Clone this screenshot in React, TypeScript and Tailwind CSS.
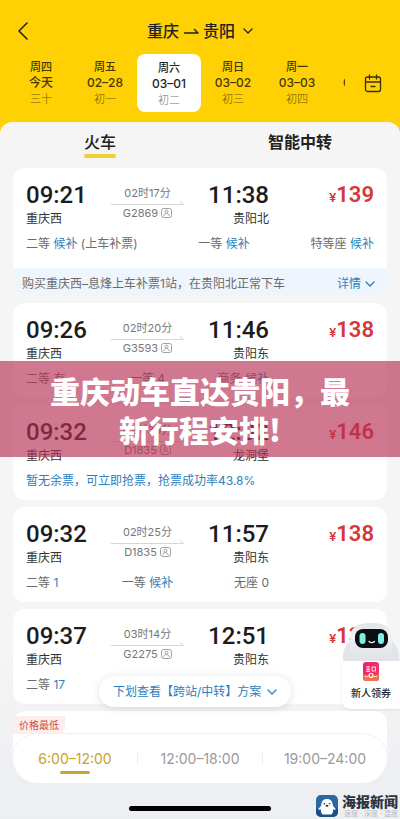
import { useState } from 'react'
import clsx from 'clsx'

type Seat = { name: string; value: string; note?: string; muted?: boolean }

type Train = {
  depart: string
  from: string
  duration: string
  no: string
  arrive: string
  to: string
  price: string
  seats?: Seat[]
  tip?: string
  notice?: string
}

const days = [
  { week: '周四', date: '今天', lunar: '三十' },
  { week: '周五', date: '02–28', lunar: '初一' },
  { week: '周六', date: '03–01', lunar: '初二' },
  { week: '周日', date: '03–02', lunar: '初三' },
  { week: '周一', date: '03–03', lunar: '初四' },
]

const trains: Train[] = [
  {
    depart: '09:21',
    from: '重庆西',
    duration: '02时17分',
    no: 'G2869',
    arrive: '11:38',
    to: '贵阳北',
    price: '139',
    seats: [
      { name: '二等', value: '候补', note: '(上车补票)' },
      { name: '一等', value: '候补' },
      { name: '特等座', value: '候补' },
    ],
    notice: '购买重庆西–息烽上车补票1站，在贵阳北正常下车',
  },
  {
    depart: '09:26',
    from: '重庆西',
    duration: '02时20分',
    no: 'G3593',
    arrive: '11:46',
    to: '贵阳东',
    price: '138',
    seats: [
      { name: '二等', value: '有', muted: true },
      { name: '一等', value: '4', muted: true },
      { name: '商务', value: '候补' },
    ],
  },
  {
    depart: '09:32',
    from: '重庆西',
    duration: '02时30分',
    no: 'D1835',
    arrive: '12:02',
    to: '龙洞堡',
    price: '146',
    tip: '暂无余票，可立即抢票，抢票成功率43.8%',
  },
  {
    depart: '09:32',
    from: '重庆西',
    duration: '02时25分',
    no: 'D1835',
    arrive: '11:57',
    to: '贵阳东',
    price: '138',
    seats: [
      { name: '二等', value: '1' },
      { name: '一等', value: '候补' },
      { name: '无座', value: '0', muted: true },
    ],
  },
  {
    depart: '09:37',
    from: '重庆西',
    duration: '03时14分',
    no: 'G2275',
    arrive: '12:51',
    to: '贵阳东',
    price: '138',
    seats: [{ name: '二等', value: '17' }],
  },
]

const periods = ['6:00–12:00', '12:00–18:00', '19:00–24:00']

const ChevronDown = ({ className }: { className?: string }) => (
  <svg viewBox="0 0 10 6" className={className} fill="none" stroke="currentColor" strokeWidth="1.3">
    <path d="M1 1l4 4 4-4" strokeLinecap="round" strokeLinejoin="round" />
  </svg>
)

const IdCardIcon = () => (
  <svg width="11" height="10" viewBox="0 0 11 10" fill="none" stroke="#8a8a8a" strokeWidth="0.8">
    <rect x="0.5" y="0.5" width="10" height="9" rx="2" />
    <circle cx="5.5" cy="3.7" r="1.5" />
    <path d="M2.6 8.2c.3-1.7 1.5-2.6 2.9-2.6s2.6.9 2.9 2.6" />
  </svg>
)

const SeatText = ({ seat }: { seat: Seat }) => (
  <span className="whitespace-nowrap text-[#6b6b6b]">
    {seat.name}{' '}
    <span className={clsx(!seat.muted && 'text-[#2b7fbd]')}>{seat.value}</span>
    {seat.note && ` ${seat.note}`}
  </span>
)

const TrainCard = ({ train }: { train: Train }) => {
  const cols = 'grid grid-cols-[85fr_73fr_85fr_105fr]'
  return (
    <li className="overflow-hidden rounded-xl bg-white">
      <div className={clsx('px-[13px] pt-[14px]', train.notice ? 'pb-[15px]' : 'pb-[10px]')}>
        <div className={cols}>
          <div>
            <div className="font-[Roboto] text-2xl/[26px] font-medium text-[#1c1c1e]">
              {train.depart}
            </div>
            <div className="mt-[3px] text-xs/4 text-[#333]">{train.from}</div>
          </div>
          <div className="pt-[3px] text-center text-[11px]/4 text-[#777]">
            <div className="whitespace-nowrap">{train.duration}</div>
            <svg viewBox="0 0 73 4" className="block h-1 w-full" fill="none" stroke="#d6d6d6">
              <path d="M0 3.500H72.500L69 0" />
            </svg>
            <div className="flex items-center justify-center gap-[3px]">
              {train.no}
              <IdCardIcon />
            </div>
          </div>
          <div className="text-right">
            <div className="font-[Roboto] text-2xl/[26px] font-medium text-[#1c1c1e]">
              {train.arrive}
            </div>
            <div className="mt-[3px] text-xs/4 text-[#333]">{train.to}</div>
          </div>
          <div className="text-right font-[Roboto] text-[22px]/[26px] font-semibold text-[#d8373a]">
            <span className="text-[13px]">¥</span>
            {train.price}
          </div>
        </div>
        {train.tip && <p className="mt-2 text-xs/[18px] text-[#2b7fbd]">{train.tip}</p>}
        {train.seats && (
          <div
            className={clsx('mt-2 text-xs/[18px]', train.notice ? 'flex justify-between' : cols)}
          >
            {train.seats.map((seat, i) => (
              <div
                key={seat.name}
                className={clsx(
                  !train.notice && i === 1 && 'flex justify-center',
                  !train.notice && i === 2 && 'text-right'
                )}
              >
                <SeatText seat={seat} />
              </div>
            ))}
          </div>
        )}
      </div>
      {train.notice && (
        <div className="flex h-7 items-center justify-between bg-[#eff5fd] pt-1 pr-3 pl-[9px] text-xs text-[#6b6b6b]">
          <span className="whitespace-nowrap">{train.notice}</span>
          <button type="button" className="flex items-center gap-1 whitespace-nowrap text-[#2b7fbd]">
            详情
            <ChevronDown className="h-[6px] w-[10px]" />
          </button>
        </div>
      )}
    </li>
  )
}

const Robot = () => (
  <svg viewBox="0 0 58 38" className="block h-[38px] w-full">
    <defs>
      <linearGradient id="shell" x1="0" y1="0" x2="0" y2="1">
        <stop offset="0" stopColor="#dfe1e5" />
        <stop offset="0.3" stopColor="#f1f2f4" />
        <stop offset="1" stopColor="#dfe2e6" />
      </linearGradient>
    </defs>
    <path d="M10 16C4 20 0 29 1 38h12zM48 16c6 4 10 13 9 22H45z" fill="#e1e4e8" />
    <path d="M29 0c14 0 20 4 21 14 1 8 0 16-3 24H11C8 30 7 22 8 14 9 4 15 0 29 0z" fill="url(#shell)" />
    <rect x="13" y="6" width="33" height="19" rx="8" fill="#0d1013" />
    <rect x="17.5" y="10" width="6" height="11" rx="3" fill="#7df0e2" />
    <rect x="36" y="10" width="6" height="11" rx="3" fill="#7df0e2" />
    <path d="M27 18.500c1.500 1.300 4 1.300 5.500 0" fill="none" stroke="#fff" strokeWidth="1.2" strokeLinecap="round" />
  </svg>
)

const CouponIcon = () => (
  <svg width="16" height="19" viewBox="0 0 16 19" className="block">
    <defs>
      <linearGradient id="coupon" x1="0" y1="0" x2="1" y2="1">
        <stop offset="0" stopColor="#e81c78" />
        <stop offset="1" stopColor="#f4475a" />
      </linearGradient>
    </defs>
    <rect width="16" height="19" rx="3" fill="url(#coupon)" />
    <path d="M0 12c5 2 11 2 16 0v4a3 3 0 0 1-3 3H3a3 3 0 0 1-3-3z" fill="#f5704f" />
    <path d="M3 5h4M3 7.500h4M5 4v5M9 5h3.500v4H9zM3 9.500h4" fill="none" stroke="#ffd9e0" />
    <circle cx="8" cy="13.5" r="2" fill="none" stroke="#fff" strokeWidth="1.2" />
    <path d="M2 14.500h3M11 14.500h3" stroke="#ffd9c0" />
  </svg>
)

const SealLogo = () => (
  <svg width="22" height="22" viewBox="0 0 22 22" className="shrink-0">
    <rect width="22" height="22" rx="5" fill="#2b68a3" />
    <path d="M0 14c5-2 17-2 22 0v3a5 5 0 0 1-5 5H5a5 5 0 0 1-5-5z" fill="#1d4f86" />
    <path
      d="M11 4c3.600 0 5.300 2.200 5.700 5.500.2 1.800 1.200 2.800 2.600 3.700.9.700.3 1.700-.9 1.500l-1.400-.2c.3 2.300-.3 4-1.500 5H6.500c-1.200-1-1.800-2.700-1.500-5l-1.400.2c-1.200.2-1.800-.8-.9-1.500 1.400-.9 2.400-1.900 2.600-3.700C5.700 6.200 7.400 4 11 4z"
      fill="#fff"
    />
    <circle cx="8.3" cy="8.8" r="0.8" fill="#222" />
    <circle cx="13.7" cy="8.8" r="0.8" fill="#222" />
    <ellipse cx="11" cy="10.8" rx="1.5" ry="1" fill="#333" />
  </svg>
)

export default function App() {
  const [day, setDay] = useState(2)
  const [tab, setTab] = useState(0)
  const [period, setPeriod] = useState(0)

  return (
    <div className="relative min-h-screen overflow-hidden bg-[#ffd003] font-[Inter,'Noto_Sans_CJK_SC',sans-serif] text-[#222]">
      <header className="pt-4 pb-[10px]">
        <div className="grid h-[30px] grid-cols-[1fr_auto_1fr] items-center px-4">
          <button type="button" aria-label="返回" className="justify-self-start">
            <svg width="13" height="20" viewBox="0 0 13 20" fill="none" stroke="#222" strokeWidth="1.6">
              <path d="M11 2L3 10l8 8" strokeLinecap="round" strokeLinejoin="round" />
            </svg>
          </button>
          <button type="button" className="flex items-center text-base/6 font-medium">
            <span>重庆</span>
            <svg width="16" height="8" viewBox="0 0 16 8" className="mx-1" fill="none" stroke="#222" strokeWidth="1.4">
              <path d="M1 6h14l-4-4" strokeLinejoin="round" />
            </svg>
            <span>贵阳</span>
            <ChevronDown className="ml-2 h-[6px] w-[10px]" />
          </button>
        </div>

        <div className="mt-2 flex h-[58px] pl-[9px]">
          {days.map((d, i) => (
            <button
              key={d.date}
              type="button"
              onClick={() => setDay(i)}
              className={clsx(
                'flex flex-1 flex-col items-center rounded-lg text-xs/4 font-medium',
                i === day ? 'bg-white pt-[6px] text-[#222]' : 'pt-[5px] text-[#443806]'
              )}
            >
              <span className="text-[11px]/4">{d.week}</span>
              <span>{d.date}</span>
              <span className={clsx('text-[11px]/4 font-light', i === day ? 'text-[#777]' : 'text-[#6e5c0c]')}>
                {d.lunar}
              </span>
            </button>
          ))}
          <div className="w-4 overflow-hidden pt-[21px] pl-[14px] text-xs/4 font-medium whitespace-nowrap text-[#443806]">
            03–04
          </div>
          <button type="button" aria-label="日历" className="flex w-[55px] items-center justify-center">
            <svg width="18" height="19" viewBox="0 0 18 19" fill="none" stroke="#3a3008" strokeWidth="1.3" strokeLinecap="round">
              <rect x="1.5" y="3" width="15" height="14.5" rx="2" />
              <path d="M5.500 1v4M12.500 1v4M1.500 8h15M7 12.500h4" />
            </svg>
          </button>
        </div>
      </header>

      <main className="rounded-t-xl bg-linear-to-b from-[#f5f5f5] from-75% to-[#eeeff3] to-95%">
        <div role="tablist" className="grid h-[46px] grid-cols-2 items-start pt-2">
          {['火车', '智能中转'].map((name, i) => (
            <button
              key={name}
              type="button"
              role="tab"
              aria-selected={i === tab}
              onClick={() => setTab(i)}
              className={clsx(
                'flex flex-col items-center text-base/6',
                i === tab ? 'font-medium' : 'font-bold'
              )}
            >
              {name}
              {i === tab && <span className="h-1 w-8 rounded-full bg-[#efd02f]" />}
            </button>
          ))}
        </div>

        <ul className="flex flex-col gap-[7px] px-[13px]">
          {trains.map((t) => (
            <TrainCard key={t.no + t.depart} train={t} />
          ))}
          <li className="h-12 overflow-hidden rounded-t-xl bg-white">
            <span className="inline-block rounded-br-md bg-[#fdeeec] px-[6px] text-[10px]/[18px] text-[#cf4a47]">
              价格最低
            </span>
          </li>
        </ul>

        <nav className="relative mx-3 -mt-[26px] flex h-[51px] items-center rounded-full border border-[#f0f0f0] bg-white">
          {periods.map((p, i) => (
            <button
              key={p}
              type="button"
              onClick={() => setPeriod(i)}
              className={clsx(
                'flex h-3 flex-1 flex-col items-center text-sm/5 whitespace-nowrap',
                i > 0 && 'border-l border-[#ececec]',
                i === period ? 'text-[#c9a227]' : 'text-[#9a9a9a]'
              )}
            >
              <span className="-mt-1">{p}</span>
              {i === period && (
                <span className="mt-[2px] h-[3px] w-[30px] shrink-0 rounded-full bg-[#c9a52f]" />
              )}
            </button>
          ))}
        </nav>

        <footer className="grid h-[35px] grid-cols-[1fr_142px_1fr] items-end pt-2">
          <div className="col-start-2 mb-2 h-[5px] rounded-full bg-black" />
          <div className="flex items-center justify-end gap-1 self-center pr-[2px]">
            <SealLogo />
            <div className="whitespace-nowrap">
              <div className="text-sm/4 font-black text-[#2b3440]">海报新闻</div>
              <div className="text-right text-[7px]/[7px] text-[#b9bcc2]">速度 · 深度 · 温度</div>
            </div>
          </div>
        </footer>
      </main>

      {/* floating hint */}
      <button
        type="button"
        className="absolute bottom-28 left-[99px] flex h-[31px] items-center gap-[6px] rounded-full bg-white px-[14px] text-xs whitespace-nowrap text-[#2b7fbd] shadow-[0_1px_8px_rgba(0,0,0,0.12)]"
      >
        下划查看【跨站/中转】方案
        <ChevronDown className="h-[6px] w-[10px]" />
      </button>

      {/* coupon robot */}
      <a href="#coupon" className="absolute right-0 bottom-[110px] w-[58px]">
        <Robot />
        <div className="flex h-12 flex-col items-center rounded-bl-lg bg-white pt-px shadow-[0_1px_3px_rgba(0,0,0,0.08)]">
          <CouponIcon />
          <span className="mt-1 text-[10px]/4 font-medium whitespace-nowrap">新人领券</span>
        </div>
      </a>

      {/* headline banner */}
      <div className="absolute inset-x-0 top-[361px] bg-[rgba(181,48,83,0.65)] px-[50px] pt-[10px] pb-2">
        <h1 className="text-center font-['Noto_Sans_CJK_SC',sans-serif] text-[30px]/[39px] font-black text-white">
          重庆动车直达贵阳，最新行程安排!
        </h1>
      </div>
    </div>
  )
}
